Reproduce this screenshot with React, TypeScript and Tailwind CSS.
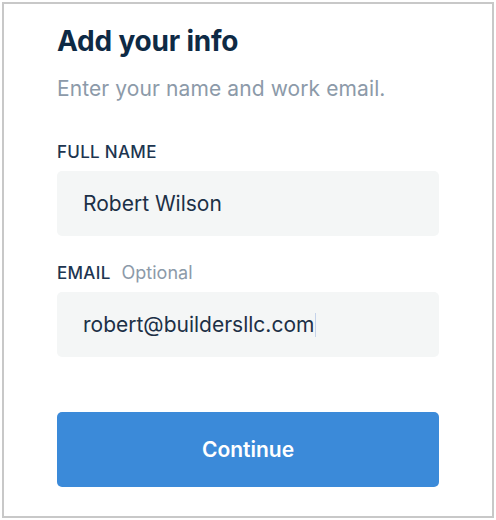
import { useState } from "react";

export default function App() {
  const [name, setName] = useState("Robert Wilson");

  return (
    <div className="w-[496px] h-[520px] bg-white p-[2px] font-['Inter',sans-serif]">
      <div className="h-full border-2 border-[#c8c8c8] bg-white px-[53px] pt-[19px]">
        {/* Heading */}
        <h1 className="text-[28px] font-bold leading-[36px] text-[#0e2a45] tracking-[-0.2px]">
          Add your info
        </h1>
        <p className="mt-[16px] text-[21px] leading-[28px] tracking-[0.1px] text-[#8c9aa9]">
          Enter your name and work email.
        </p>

        {/* Full name */}
        <label className="mt-[39px] block text-[17px] font-medium leading-[20px] tracking-[0.3px] text-[#1d3550]">
          FULL NAME
        </label>
        <input
          value={name}
          onChange={(e) => setName(e.target.value)}
          className="mt-[9px] block h-[65px] w-full rounded-[5px] bg-[#f4f6f6] px-[26px] text-[21px] text-[#1c3046] outline-none"
        />

        {/* Email (focused, caret after the value) */}
        <div className="mt-[27px] flex items-baseline gap-[11px] leading-[20px]">
          <span className="text-[17px] font-medium tracking-[0.3px] text-[#1d3550]">EMAIL</span>
          <span className="text-[18px] text-[#8c9aa9]">Optional</span>
        </div>
        <div className="mt-[9px] flex h-[65px] w-full items-center rounded-[5px] bg-[#f4f6f6] px-[26px] text-[21px] text-[#1c3046]">
          <span>robert@buildersllc.com</span>
          <span className="ml-[1px] h-[24px] w-[1px] bg-[#c5d3ea]" />
        </div>

        {/* Action */}
        <button className="mt-[55px] h-[75px] w-full rounded-[5px] bg-[#3b8ad9] text-[21px] font-semibold text-white">
          Continue
        </button>
      </div>
    </div>
  );
}
